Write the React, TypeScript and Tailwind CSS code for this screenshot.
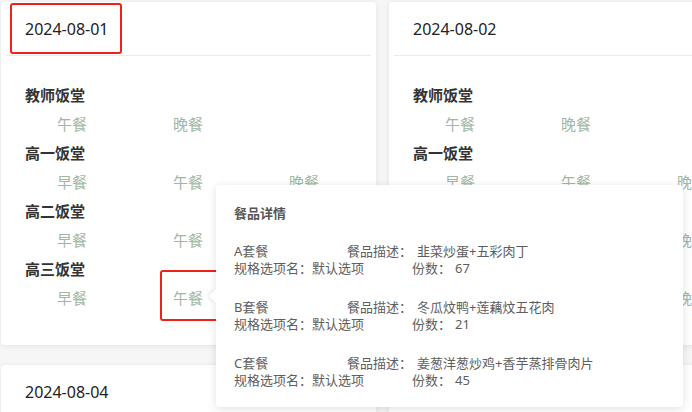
import React from "react";

const FONT = { fontFamily: '"Noto Sans", "Noto Sans CJK SC", sans-serif' };

type Canteen = { name: string; meals: string[] };

const day1: Canteen[] = [
  { name: "教师饭堂", meals: ["午餐", "晚餐"] },
  { name: "高一饭堂", meals: ["早餐", "午餐", "晚餐"] },
  { name: "高二饭堂", meals: ["早餐", "午餐", "晚餐"] },
  { name: "高三饭堂", meals: ["早餐", "午餐", "晚餐"] },
];

function Card({ date, canteens }: { date: string; canteens: Canteen[] }) {
  return (
    <div className="w-[375px] shrink-0 rounded-[4px] bg-white shadow-[0_1px_6px_rgba(0,0,0,0.08)]">
      <div className="flex h-[53px] items-center px-6 text-[16px] text-[#222]">{date}</div>
      <div className="mx-[5px] h-px bg-[#ebebeb]" />
      <div className="px-6 pt-[25px] pb-[32px]">
        {canteens.map((c) => (
          <div key={c.name}>
            <div className="text-[15px] font-bold leading-[29px] text-[#333]">{c.name}</div>
            <div className="flex pl-8 text-[15px] leading-[29px] text-[#a2b7a2]">
              {c.meals.map((m) => (
                <div key={m} className="w-[116px] shrink-0">
                  {m}
                </div>
              ))}
            </div>
          </div>
        ))}
      </div>
    </div>
  );
}

const items = [
  { name: "A套餐", desc: "韭菜炒蛋+五彩肉丁", count: "67" },
  { name: "B套餐", desc: "冬瓜炆鸭+莲藕炆五花肉", count: "21" },
  { name: "C套餐", desc: "姜葱洋葱炒鸡+香芋蒸排骨肉片", count: "45" },
];

export default function App() {
  return (
    <div className="relative h-[412px] w-[692px] overflow-hidden bg-[#f6f6f6]" style={FONT}>
      <div className="grid grid-cols-[375px_375px] gap-x-[13px] gap-y-[20px] pl-px pt-[2px]">
        <Card date="2024-08-01" canteens={day1} />
        <Card date="2024-08-02" canteens={day1} />
        <Card date="2024-08-04" canteens={day1} />
        <Card date="2024-08-05" canteens={day1} />
      </div>

      {/* annotation boxes */}
      <div className="absolute left-[10px] top-[3px] h-[51px] w-[112px] rounded-[3px] border-2 border-[#f0201c]" />
      <div className="absolute left-[160px] top-[270px] h-[51px] w-[62px] rounded-[3px] border-2 border-[#f0201c]" />

      {/* popover */}
      <div className="absolute left-[216px] top-[185px] h-[222px] w-[467px] rounded-[4px] bg-white px-[18px] pt-[18px] text-[13px] text-[#5e5e5e] shadow-[0_2px_10px_rgba(0,0,0,0.12)]">
        <div className="absolute left-[-5px] top-[106px] h-[10px] w-[10px] rotate-45 bg-white shadow-[-2px_2px_3px_rgba(0,0,0,0.05)]" />
        <div className="font-bold leading-[20px] text-[#555]">餐品详情</div>
        <div className="mt-[20px] flex flex-col gap-[22px]">
          {items.map((it) => (
            <div key={it.name} className="leading-[17px]">
              <div className="flex">
                <span className="w-[113px] shrink-0">{it.name}</span>
                <span>餐品描述：</span>
                <span className="ml-[5px]">{it.desc}</span>
              </div>
              <div className="flex">
                <span className="w-[178px] shrink-0">规格选项名：默认选项</span>
                <span>份数：</span>
                <span className="ml-[4px]">{it.count}</span>
              </div>
            </div>
          ))}
        </div>
      </div>
    </div>
  );
}
